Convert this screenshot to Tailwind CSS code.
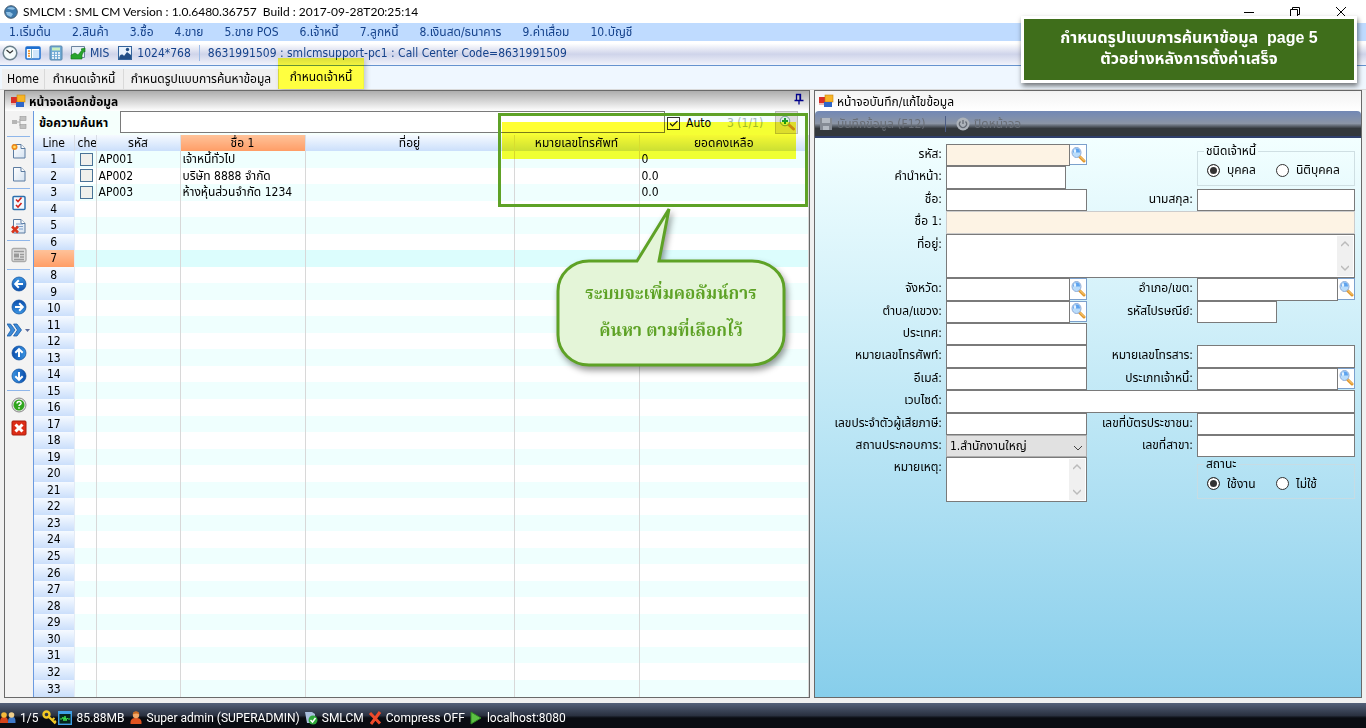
<!DOCTYPE html>
<html lang="th">
<head>
<meta charset="utf-8">
<title>SMLCM</title>
<script src="https://cdn.jsdelivr.net/npm/@tailwindcss/browser@4"></script>
</head>
<body class="relative flex h-screen flex-col overflow-hidden bg-[#f0f0f0] text-xs text-black font-['DejaVu_Sans_Condensed','Noto_Sans_Thai',sans-serif]">

<svg class="absolute size-0" aria-hidden="true">
  <defs>
    <linearGradient id="gBlue" x1="0" y1="0" x2="0" y2="1"><stop offset="0" stop-color="#3a94e2"/><stop offset="1" stop-color="#0b4fae"/></linearGradient>
    <linearGradient id="gPage" x1="0" y1="0" x2="1" y2="1"><stop offset="0" stop-color="#fff"/><stop offset="1" stop-color="#d5e3f2"/></linearGradient>
  </defs>
  <symbol id="form" viewBox="0 0 16 16"><rect x="1" y="4" width="6" height="6" fill="#d8302a"/><rect x="7" y="2" width="8" height="7" fill="#f7b526" stroke="#c8820c" stroke-width=".6"/><rect x="6" y="9" width="8" height="5" fill="#2f66c8"/><rect x="1" y="10" width="5" height="2" fill="#e9b7b0"/></symbol>
  <symbol id="page" viewBox="0 0 16 16"><path d="M2.500 1.500h7.500l4 4v9.500h-11.500z" fill="url(#gPage)" stroke="#5b7ba0"/><path d="M10 1.500v4h4" fill="#fff" stroke="#5b7ba0"/></symbol>
  <symbol id="find" viewBox="0 0 16 16"><path d="M9.500 9.500l4.500 4.500" stroke="#e0962a" stroke-width="3" stroke-linecap="round"/><path d="M10 9.500l4 4" stroke="#ffd98a" stroke-linecap="round"/><ellipse cx="6.500" cy="5.500" rx="4.500" ry="5" fill="#b9dcfb" stroke="#8fabd6"/><path d="M3 5.500a3.500 4 0 0 1 7 0z" fill="#5ea3ee"/><ellipse cx="5" cy="4" rx="1.200" ry="2" fill="#e3f2ff"/></symbol>
  <symbol id="ball" viewBox="0 0 16 16"><circle cx="8" cy="8" r="7" fill="url(#gBlue)" stroke="#0c4a98" stroke-width=".7"/><path d="M12 8H4.500M7.800 4.300L4.200 8l3.600 3.700" fill="none" stroke="#fff" stroke-width="2"/></symbol>
  <symbol id="person" viewBox="0 0 14 14"><path d="M1.500 13c-.5-5 2-6 5.500-6s6 1 5.500 6z" fill="#e0531f"/><circle cx="7" cy="4" r="3.200" fill="#f3a868"/><path d="M3.700 3.500c0-4.500 6.600-4.500 6.600 0-2-1.500-4-1.500-6.600 0z" fill="#c96a22"/></symbol>
</svg>

<!-- Title bar -->
<header class="flex h-[23px] shrink-0 items-center bg-white pl-1">
  <svg class="size-3.5" viewBox="0 0 14 14"><circle cx="7" cy="7" r="6.300" fill="#3c79ad" stroke="#4a5f72"/><path d="M3 3.500c3-2 6-1 8 0-1 2-5 1-8 0zM2 7h4l3 2-2 3-4-2z" fill="#8fbfe3"/></svg>
  <h1 class="ml-[5px] flex-1 whitespace-pre font-['Lato']">SMLCM : SML CM Version : 1.0.6480.36757  Build : 2017-09-28T20:25:14</h1>
  <button aria-label="Minimize" class="flex h-5 w-[46px] items-center justify-center"><svg class="size-3" viewBox="0 0 12 12"><path d="M1 6.500h10" stroke="#000"/></svg></button>
  <button aria-label="Restore" class="flex h-5 w-[46px] items-center justify-center"><svg class="size-3" viewBox="0 0 12 12"><path d="M1.500 3.500h7v7h-7zM3.500 3.500v-2h7v7h-2" fill="none" stroke="#000"/></svg></button>
  <button aria-label="Close" class="mr-0.5 flex h-5 w-[46px] items-center justify-center"><svg class="size-3" viewBox="0 0 12 12"><path d="M1 1l10 10M11 1L1 11" stroke="#000"/></svg></button>
</header>

<!-- Menu bar -->
<nav class="flex h-[18px] shrink-0 items-center gap-[21px] bg-[#bfdbff] pl-[9px] whitespace-nowrap text-[#15428b]">
  <a href="#">1.เริ่มต้น</a><a href="#">2.สินค้า</a><a href="#">3.ซื้อ</a><a href="#">4.ขาย</a><a href="#">5.ขาย POS</a><a href="#">6.เจ้าหนี้</a><a href="#">7.ลูกหนี้</a><a href="#">8.เงินสด/ธนาคาร</a><a href="#">9.ค่าเสื่อม</a><a href="#">10.บัญชี</a>
</nav>

<!-- Tool bar -->
<div class="flex h-[25px] shrink-0 items-center border-b border-[#6593cf] bg-linear-to-b from-white from-10% via-[#cfd4ea] via-55% to-[#f1f3fb] pl-0.5 whitespace-nowrap text-[#15428b]">
  <button aria-label="Clock"><svg class="size-4" viewBox="0 0 16 16"><circle cx="8" cy="8" r="6.800" fill="#f5fbfb" stroke="#6b808c" stroke-width="1.500"/><path d="M4.500 5L8 8l3-2.500" fill="none" stroke="#333" stroke-width="1.200"/></svg></button>
  <button aria-label="Layout" class="ml-[7px]"><svg class="size-4" viewBox="0 0 16 16"><rect x="1" y="2" width="14" height="12" rx="1" fill="#fff" stroke="#1c6fd0" stroke-width="1.500"/><path d="M1 3h14" stroke="#1c6fd0" stroke-width="2"/><path d="M6.500 4v10" stroke="#7ab"/><path d="M3 6h2M3 8.500h2M3 11h2" stroke="#f08a1c" stroke-width="1.500"/><rect x="8" y="5" width="6" height="8" fill="#cfe6fb"/></svg></button>
  <button aria-label="Calculator" class="ml-[7px]"><svg class="size-4" viewBox="0 0 16 16"><rect x="2" y="1" width="12" height="14" rx="1" fill="#6fa9d4" stroke="#5a88ad"/><rect x="4" y="2.500" width="8" height="3" fill="#c9efc0"/><path d="M4 8h8M4 10.500h8M4 13h8" stroke="#fff" stroke-width="1.500" stroke-dasharray="2 1"/></svg></button>
  <button class="ml-[6px] flex items-center gap-1"><svg class="size-4" viewBox="0 0 16 16"><path d="M1.500 1.500h13v11h-13z" fill="#e8f0f8" stroke="#6c84a0"/><path d="M1 14V10l4-2 3 2 4-5-1-1 4-1v4l-1-1-2 4v4z" fill="#27a52c" stroke="#127018" stroke-width=".6"/></svg>MIS</button>
  <button class="ml-[8px] flex items-center gap-1"><svg class="size-4" viewBox="0 0 16 16"><rect x="1.500" y="1.500" width="13" height="13" fill="#e8f2fc" stroke="#35649c"/><path d="M2 14c0-4 3-6 5-3l3-4 4 3v4z" fill="#234f86"/><circle cx="10.500" cy="4.500" r="1.700" fill="#234f86"/></svg>1024*768</button>
  <span class="mx-2 h-4 w-px bg-[#9ebce6]"></span>
  <span>8631991509 : smlcmsupport-pc1 : Call Center Code=8631991509</span>
</div>

<!-- Document tabs -->
<div class="flex h-6 shrink-0 items-end border-b border-[#d9d9d9] bg-[#eff7ff] pl-0.5 whitespace-nowrap">
  <button class="h-5 w-[43px] border-r border-[#d9d9d9] bg-[#f0f0f0]">Home</button>
  <button class="h-5 w-[79px] border-r border-[#d9d9d9] bg-[#f0f0f0]">กำหนดเจ้าหนี้</button>
  <button class="h-5 w-[155px] border-r border-[#d9d9d9] bg-[#f0f0f0]">กำหนดรูปแบบการค้นหาข้อมูล</button>
  <div class="relative h-[23px] w-[84px]">
    <button class="size-full bg-white pb-0.5">กำหนดเจ้าหนี้</button>
    <div class="absolute -top-2 -left-px h-[31px] w-[86px] bg-[#ffff40] mix-blend-multiply shadow-[2px_2px_5px_#0003]"></div>
  </div>
</div>

<main class="flex min-h-0 flex-1 pr-1 pl-1">
  <!-- Record picker -->
  <section class="relative flex w-[806px] shrink-0 flex-col border border-[#696969] bg-white">
    <div class="flex h-[20px] shrink-0 items-center bg-linear-to-b from-[#adadad] to-white pl-[5px]">
      <svg class="size-4"><use href="#form"/></svg>
      <h2 class="ml-[3px] flex-1 pt-0.5 font-bold">หน้าจอเลือกข้อมูล</h2>
      <button aria-label="Pin" class="mr-1 mb-1"><svg class="size-3" viewBox="0 0 12 12"><path d="M3.500 7V1.500h4V7M7 1.500V7M1.500 7.500h9M6 7v4.500" fill="none" stroke="#00008b" stroke-width="1.300"/></svg></button>
    </div>
    <div class="flex min-h-0 flex-1">
      <div class="flex w-[29px] shrink-0 flex-col border-r border-[#6a9ae0] bg-[#f3f3f3] pr-px">
        <button aria-label="Tree" class="flex h-[23px] items-center justify-center"><svg class="size-4" viewBox="0 0 16 16"><path d="M4 7h5M9 4v7M9 4h2M9 11h2" stroke="#aaa" fill="none"/><rect x="1" y="5" width="5" height="4" fill="#b5b5b5"/><rect x="9" y="1.500" width="6" height="4" fill="#c0c0c0" stroke="#999" stroke-width=".6"/><rect x="9" y="9.500" width="6" height="4" fill="#c0c0c0" stroke="#999" stroke-width=".6"/></svg></button>
        <hr class="mx-0.5 my-[2px] border-t-0 border-b border-[#8fb6ea]">
        <button aria-label="New" class="flex h-[23px] items-center justify-center"><svg class="size-4" viewBox="0 0 16 16"><use href="#page"/><circle cx="3.500" cy="4" r="3" fill="#f08a1c"/><circle cx="3.500" cy="4" r="1.300" fill="#ffe46a"/></svg></button>
        <button aria-label="Blank" class="flex h-[23px] items-center justify-center"><svg class="size-4"><use href="#page"/></svg></button>
        <hr class="mx-0.5 mt-[3px] mb-[2px] border-t-0 border-b border-[#8fb6ea]">
        <button aria-label="Select all" class="flex h-[23px] items-center justify-center"><svg class="size-4" viewBox="0 0 16 16"><rect x="2" y="1.500" width="12" height="13" rx="1" fill="#f4f9ff" stroke="#2c6fae" stroke-width="1.500"/><path d="M5 4.500l2 2 3.500-4M5 10l2 2 3.500-4" fill="none" stroke="#d3231c" stroke-width="1.600"/></svg></button>
        <button aria-label="Delete" class="flex h-[23px] items-center justify-center"><svg class="size-4" viewBox="0 0 16 16"><use href="#page"/><path d="M5 6h7M5 8.500h7M8 11h4" stroke="#7b9cc8"/><path d="M1 8.500l6 6M7 8.500l-6 6" stroke="#d8351d" stroke-width="2.500"/></svg></button>
        <hr class="mx-0.5 mt-[3px] mb-[2px] border-t-0 border-b border-[#8fb6ea]">
        <button aria-label="Form view" class="flex h-[23px] items-center justify-center"><svg class="size-4" viewBox="0 0 16 16"><rect x="1" y="1.500" width="14" height="13" rx="1.500" fill="#e0e0e0" stroke="#aaa" stroke-width="1.300"/><path d="M3 4.500h10M9 7.500h4M9 10h4M3 12.500h10" stroke="#999" stroke-width="1.300"/><rect x="3" y="6.500" width="5" height="4" fill="#999"/></svg></button>
        <hr class="mx-0.5 mt-[3px] mb-[2px] border-t-0 border-b border-[#8fb6ea]">
        <button aria-label="Previous" class="flex h-[23px] items-center justify-center"><svg class="size-4"><use href="#ball"/></svg></button>
        <button aria-label="Next" class="flex h-[23px] items-center justify-center"><svg class="size-4 rotate-180"><use href="#ball"/></svg></button>
        <button aria-label="More" class="flex h-[23px] items-center justify-center"><svg class="h-4 w-6" viewBox="0 0 24 16"><path d="M0 2h3.500l4.500 6-4.500 6H0l4-6zM6.500 2H10l4.500 6-4.500 6H6.500l4-6z" fill="#3a8ad8" stroke="#1c5da8" stroke-width=".8"/><path d="M18 7h5l-2.500 3z" fill="#5b6b9b"/></svg></button>
        <button aria-label="Up" class="flex h-[23px] items-center justify-center"><svg class="size-4 rotate-90"><use href="#ball"/></svg></button>
        <button aria-label="Down" class="flex h-[23px] items-center justify-center"><svg class="size-4 -rotate-90"><use href="#ball"/></svg></button>
        <hr class="mx-0.5 mt-[3px] mb-[2px] border-t-0 border-b border-[#8fb6ea]">
        <button aria-label="Help" class="flex h-[23px] items-center justify-center"><svg class="size-4" viewBox="0 0 16 16"><circle cx="8" cy="8" r="7" fill="#e4e4e4" stroke="#8a8a8a"/><circle cx="8" cy="8" r="5.500" fill="#2fa51d"/><path d="M6 6.500c0-3 4.500-2.500 4 0-.3 1.200-2 1-2 2.500M8 10.300v1.400" fill="none" stroke="#fff" stroke-width="1.500"/></svg></button>
        <button aria-label="Close panel" class="flex h-[23px] items-center justify-center"><svg class="size-4" viewBox="0 0 16 16"><rect x="1" y="1" width="14" height="14" rx="1" fill="#dd2d17" stroke="#a81c0c"/><path d="M4.500 4.500l7 7M11.500 4.500l-7 7" stroke="#fff" stroke-width="3"/></svg></button>
      </div>
      <div class="flex min-w-0 flex-1 flex-col">
        <div class="flex h-[24px] shrink-0 items-start bg-[#f5fffc]">
          <label for="q" class="w-[86px] pt-1 pl-[5px] font-bold whitespace-nowrap">ข้อความค้นหา</label>
          <input id="q" class="h-[22px] min-w-0 flex-1 border border-[#7a7a7a] bg-white px-1">
          <label class="flex h-6 w-[62px] items-center gap-[6px] pl-[2px]"><span class="relative flex size-[13px]"><input type="checkbox" checked class="size-[13px] appearance-none border border-[#333] bg-white"><svg class="pointer-events-none absolute inset-0 size-[13px]" viewBox="0 0 13 13"><path d="M3 6.500l2.500 2.500L10.500 4" fill="none" stroke="#222" stroke-width="1.200"/></svg></span>Auto</label>
          <span class="flex h-6 w-[48px] items-center whitespace-nowrap text-[#a3b9b5]">3 (1/1)</span>
          <button aria-label="Find" class="mr-[11px] flex size-[23px] items-center justify-center border border-[#bbb] bg-[#ddd]"><svg class="size-4" viewBox="0 0 16 16"><path d="M9 9l5.500 5" stroke="#c98a44" stroke-width="3" stroke-linecap="round"/><circle cx="6" cy="6" r="4.800" fill="#d9eee2" stroke="#7f9aa0"/><path d="M6 3v6M3 6h6" stroke="#1f9b2d" stroke-width="2"/></svg></button>
        </div>
        <div class="min-h-0 flex-1">
          <table class="h-full w-full table-fixed border-collapse leading-none">
            <colgroup><col class="w-[40px]"><col class="w-[22px]"><col class="w-[84px]"><col class="w-[125px]"><col class="w-[209px]"><col class="w-[125px]"><col></colgroup>
            <thead>
              <tr class="h-[16px] bg-linear-to-b from-[#f6faff] to-[#cbdffb] whitespace-nowrap [&>th]:overflow-hidden [&>th]:border-r [&>th]:border-[#d8dde6] [&>th]:p-0 [&>th]:font-normal">
                <th>Line</th><th class="text-left"><span class="pl-[3px]">che</span></th><th>รหัส</th><th class="bg-linear-to-b from-[#ffc299] to-[#ff9d66]">ชื่อ 1</th><th>ที่อยู่</th><th>หมายเลขโทรศัพท์</th><th>ยอดคงเหลือ</th>
              </tr>
            </thead>
            <tbody id="rows" class="whitespace-nowrap [&_td]:border-r [&_td]:border-[#d8d8d8] [&_td]:p-0 [&_td]:pl-[2px] [&_th]:border-r [&_th]:border-[#e4ebf5] [&_th]:p-0 [&_th]:font-normal"></tbody>
          </table>
        </div>
      </div>
    </div>

    <!-- Highlight marker and callout over the grid -->
    <div class="absolute top-[31px] left-[497px] h-[37px] w-[294px] bg-[#ffff33] mix-blend-multiply"></div>
    <div class="absolute top-[22px] left-[493px] h-[94px] w-[310px] border-3 border-[#5ea226]"></div>
    <svg class="absolute top-[114px] left-[548px] h-[168px] w-[240px] drop-shadow-[2px_4px_3px_#0006]" viewBox="0 0 240 168">
      <path d="M36 56H84L116 4 106 56H199A32 28 0 0 1 231 84V130A32 30 0 0 1 199 160H36A31 30 0 0 1 5 130V86A31 30 0 0 1 36 56Z" fill="#e4f5d8" stroke="#5ea226" stroke-width="3"/>
    </svg>
    <p class="absolute top-[185px] left-[555px] w-[222px] text-center font-['Noto_Serif_Thai','Norasi',serif] text-[17px] leading-[37px] font-bold text-[#5ea226]">ระบบจะเพิ่มคอลัมน์การ<br>ค้นหา ตามที่เลือกไว้</p>
  </section>

  <!-- Record editor -->
  <section class="ml-1 flex min-w-0 flex-1 flex-col border border-[#696969] bg-linear-to-b from-[#f2ffff] from-8% to-[#87ceeb]">
    <div class="flex h-[20px] shrink-0 items-center bg-linear-to-b from-[#f3f3f3] to-white pl-[3px]">
      <svg class="size-4"><use href="#form"/></svg><h2 class="ml-[3px] pt-0.5">หน้าจอบันทึก/แก้ไขข้อมูล</h2>
    </div>
    <div class="flex h-[27px] shrink-0 items-center rounded-t-sm border-b-2 border-[#2f3f6b] bg-linear-to-b from-[#7288b5] via-[#8b95a5] via-50% to-[#33383c] to-70% pl-[4px] text-[#696e76]">
      <button disabled class="flex w-[127px] items-center gap-1 border-r border-[#4c5d85]"><svg class="size-3.5" viewBox="0 0 14 14"><path d="M1 1h12v12H1z" fill="#858b94"/><path d="M3 1h8v5H3zM4 9h6v4H4z" fill="#b4bac2"/></svg>บันทึกข้อมูล (F12)</button>
      <button disabled class="ml-2.5 flex items-center gap-1"><svg class="size-3.5" viewBox="0 0 14 14"><circle cx="7" cy="7" r="6.500" fill="#adb3ba"/><path d="M7 3v4M4.500 4.500a3.500 3.500 0 1 0 5 0" fill="none" stroke="#666c75" stroke-width="1.300"/></svg>ปิดหน้าจอ</button>
    </div>

    <form class="mt-1.5 grid h-[358px] shrink-0 grid-cols-[131px_141px_110px_minmax(0,1fr)] grid-rows-16 pr-1.5 whitespace-nowrap [&>label]:pt-[1px] [&>label]:pr-1 [&>label]:text-right [&>label]:leading-[18px]">
      <label for="f1" class="col-start-1 row-start-1">รหัส:</label>
      <div class="col-start-2 row-start-1 flex"><input id="f1" class="min-w-0 flex-1 border border-[#7a7a7a] bg-[#fdf3e4] px-1"><button type="button" aria-label="Find code" class="mb-px flex w-[17px] items-center justify-center border border-l-0 border-[#7ba0cc] bg-white"><svg class="size-4"><use href="#find"/></svg></button></div>
      <fieldset class="relative col-start-4 row-span-2 row-start-1 mt-[7px] mb-[3px] flex min-w-0 items-center border border-[#cfdfe3] pt-1 pl-[9px]">
        <legend class="absolute -top-[9px] left-[6px] bg-[#effdfe] px-0.5 leading-4">ชนิดเจ้าหนี้</legend>
        <label class="flex w-[69px] items-center gap-[7px]"><input type="radio" name="kind" checked class="size-[13px] appearance-none rounded-full border border-[#333] bg-white checked:bg-[#333] checked:shadow-[inset_0_0_0_2px_#fff]">บุคคล</label>
        <label class="flex items-center gap-[7px]"><input type="radio" name="kind" class="size-[13px] appearance-none rounded-full border border-[#333] bg-white">นิติบุคคล</label>
      </fieldset>
      <label for="f2" class="col-start-1 row-start-2">คำนำหน้า:</label>
      <input id="f2" class="col-start-2 row-start-2 mr-[21px] min-w-0 border border-[#7a7a7a] bg-white px-1">
      <label for="f3" class="col-start-1 row-start-3">ชื่อ:</label>
      <input id="f3" class="col-start-2 row-start-3 min-w-0 border border-[#7a7a7a] bg-white px-1">
      <label for="f4" class="col-start-3 row-start-3">นามสกุล:</label>
      <input id="f4" class="col-start-4 row-start-3 min-w-0 border border-[#7a7a7a] bg-white px-1">
      <label for="f5" class="col-start-1 row-start-4">ชื่อ 1:</label>
      <input id="f5" class="col-span-3 col-start-2 row-start-4 min-w-0 border border-[#ccc] bg-[#fdf3e4] px-1">
      <label for="f6" class="col-start-1 row-start-5">ที่อยู่:</label>
      <div class="col-span-3 col-start-2 row-span-2 row-start-5 flex border border-[#7a7a7a] bg-white"><textarea id="f6" class="min-w-0 flex-1 resize-none px-1"></textarea><div class="m-px flex w-[16px] flex-col items-center justify-between bg-[#f0f0f0] py-1"><svg class="size-2" viewBox="0 0 8 8"><path d="M0 6l4-4 4 4" fill="none" stroke="#bbb" stroke-width="1.500"/></svg><svg class="size-2" viewBox="0 0 8 8"><path d="M0 2l4 4 4-4" fill="none" stroke="#bbb" stroke-width="1.500"/></svg></div></div>
      <label for="f7" class="col-start-1 row-start-7">จังหวัด:</label>
      <div class="col-start-2 row-start-7 flex"><input id="f7" class="min-w-0 flex-1 border border-[#7a7a7a] bg-white px-1"><button type="button" aria-label="Find province" class="mb-px flex w-[17px] items-center justify-center border border-l-0 border-[#7ba0cc] bg-white"><svg class="size-4"><use href="#find"/></svg></button></div>
      <label for="f8" class="col-start-3 row-start-7">อำเภอ/เขต:</label>
      <div class="col-start-4 row-start-7 flex"><input id="f8" class="min-w-0 flex-1 border border-[#7a7a7a] bg-white px-1"><button type="button" aria-label="Find district" class="mb-px flex w-[17px] items-center justify-center border border-l-0 border-[#7ba0cc] bg-white"><svg class="size-4"><use href="#find"/></svg></button></div>
      <label for="f9" class="col-start-1 row-start-8">ตำบล/แขวง:</label>
      <div class="col-start-2 row-start-8 flex"><input id="f9" class="min-w-0 flex-1 border border-[#7a7a7a] bg-white px-1"><button type="button" aria-label="Find subdistrict" class="mb-px flex w-[17px] items-center justify-center border border-l-0 border-[#7ba0cc] bg-white"><svg class="size-4"><use href="#find"/></svg></button></div>
      <label for="f10" class="col-start-3 row-start-8">รหัสไปรษณีย์:</label>
      <input id="f10" class="col-start-4 row-start-8 w-20 border border-[#7a7a7a] bg-white px-1">
      <label for="f11" class="col-start-1 row-start-9">ประเทศ:</label>
      <input id="f11" class="col-start-2 row-start-9 min-w-0 border border-[#7a7a7a] bg-white px-1">
      <label for="f12" class="col-start-1 row-start-10">หมายเลขโทรศัพท์:</label>
      <input id="f12" class="col-start-2 row-start-10 min-w-0 border border-[#7a7a7a] bg-white px-1">
      <label for="f13" class="col-start-3 row-start-10">หมายเลขโทรสาร:</label>
      <input id="f13" class="col-start-4 row-start-10 min-w-0 border border-[#7a7a7a] bg-white px-1">
      <label for="f14" class="col-start-1 row-start-11">อีเมล์:</label>
      <input id="f14" class="col-start-2 row-start-11 min-w-0 border border-[#7a7a7a] bg-white px-1">
      <label for="f15" class="col-start-3 row-start-11">ประเภทเจ้าหนี้:</label>
      <div class="col-start-4 row-start-11 flex"><input id="f15" class="min-w-0 flex-1 border border-[#7a7a7a] bg-white px-1"><button type="button" aria-label="Find type" class="mb-px flex w-[17px] items-center justify-center border border-l-0 border-[#7ba0cc] bg-white"><svg class="size-4"><use href="#find"/></svg></button></div>
      <label for="f16" class="col-start-1 row-start-12">เวบไซด์:</label>
      <input id="f16" class="col-span-3 col-start-2 row-start-12 min-w-0 border border-[#7a7a7a] bg-white px-1">
      <label for="f17" class="col-start-1 row-start-13">เลขประจำตัวผู้เสียภาษี:</label>
      <input id="f17" class="col-start-2 row-start-13 min-w-0 border border-[#7a7a7a] bg-white px-1">
      <label for="f18" class="col-start-3 row-start-13">เลขที่บัตรประชาชน:</label>
      <input id="f18" class="col-start-4 row-start-13 min-w-0 border border-[#7a7a7a] bg-white px-1">
      <label for="f19" class="col-start-1 row-start-14">สถานประกอบการ:</label>
      <div class="relative col-start-2 row-start-14 flex min-w-0"><select id="f19" class="min-w-0 flex-1 appearance-none border border-[#adadad] bg-[#e1e1e1] px-[3px] leading-none"><option>1.สำนักงานใหญ่</option></select><svg class="pointer-events-none absolute top-2 right-1 size-2.5" viewBox="0 0 10 10"><path d="M1 3l4 4 4-4" fill="none" stroke="#444"/></svg></div>
      <label for="f20" class="col-start-3 row-start-14">เลขที่สาขา:</label>
      <input id="f20" class="col-start-4 row-start-14 min-w-0 border border-[#7a7a7a] bg-white px-1">
      <label for="f21" class="col-start-1 row-start-15">หมายเหตุ:</label>
      <div class="col-start-2 row-span-2 row-start-15 flex min-w-0 border border-[#7a7a7a] bg-white"><textarea id="f21" class="min-w-0 flex-1 resize-none px-1"></textarea><div class="m-px flex w-[16px] flex-col items-center justify-between bg-[#f0f0f0] py-1"><svg class="size-2" viewBox="0 0 8 8"><path d="M0 6l4-4 4 4" fill="none" stroke="#bbb" stroke-width="1.500"/></svg><svg class="size-2" viewBox="0 0 8 8"><path d="M0 2l4 4 4-4" fill="none" stroke="#bbb" stroke-width="1.500"/></svg></div></div>
      <fieldset class="relative col-start-4 row-span-2 row-start-15 mt-[7px] mb-[3px] flex min-w-0 items-center border border-[#c6dce4] pt-1 pl-[9px]">
        <legend class="absolute -top-[7px] left-[6px] bg-[#b4e3f3] px-0.5 leading-3">สถานะ</legend>
        <label class="flex w-[69px] items-center gap-[7px]"><input type="radio" name="state" checked class="size-[13px] appearance-none rounded-full border border-[#333] bg-white checked:bg-[#333] checked:shadow-[inset_0_0_0_2px_#fff]">ใช้งาน</label>
        <label class="flex items-center gap-[7px]"><input type="radio" name="state" class="size-[13px] appearance-none rounded-full border border-[#333] bg-white">ไม่ใช้</label>
      </fieldset>
    </form>
  </section>
</main>

<!-- Status bar -->
<footer class="mt-[5px] flex h-[25px] shrink-0 items-center bg-linear-to-b from-[#55617a] via-[#2a3140] via-50% to-[#0a0c12] to-60% pt-1 whitespace-nowrap text-white font-['Roboto']">
  <svg class="size-4" viewBox="0 0 16 16"><path d="M0 13c0-5 1-6 4-6s4 1 4 6z" fill="#d6451c"/><circle cx="4" cy="5" r="2.800" fill="#f5b93a"/><path d="M8 13c0-5 1-6 4-6s3.500 1 3.500 6z" fill="#3f78c8"/><circle cx="11.500" cy="5" r="2.800" fill="#f0cf8a"/></svg>
  <span class="ml-1">1/5</span>
  <svg class="ml-1 size-4" viewBox="0 0 16 16"><circle cx="4.500" cy="4.500" r="3" fill="none" stroke="#f2c924" stroke-width="2.400"/><path d="M6.500 6.500l7 7M10 10l2.500-2M12 12.500l2-1.500" stroke="#f2c924" stroke-width="2.200"/></svg>
  <svg class="size-3.5" viewBox="0 0 14 14"><rect x=".7" y=".7" width="12.600" height="12.600" fill="#06251c" stroke="#3fa0e6" stroke-width="1.400"/><path d="M1 2h12" stroke="#3fa0e6" stroke-width="2"/><path d="M2 8h2l1-2 1 4 1-5 1 5 1-3 1 1h2" fill="none" stroke="#3be04c"/></svg>
  <span class="ml-1">85.88MB</span>
  <svg class="ml-1 size-3.5"><use href="#person"/></svg>
  <span class="ml-1">Super admin (SUPERADMIN)</span>
  <svg class="ml-1 size-3.5" viewBox="0 0 14 14"><path d="M1 1h7l3 2v9H3z" fill="#a9bfdc"/><circle cx="9" cy="9" r="4.500" fill="#2fa83a"/><path d="M6.500 9l2 2 3-4" fill="none" stroke="#fff" stroke-width="1.500"/></svg>
  <span class="ml-1">SMLCM</span>
  <svg class="ml-1 size-3.5" viewBox="0 0 14 14"><path d="M2 2l10 10.500M12 1L3 13" stroke="#ee4a2a" stroke-width="3"/></svg>
  <span class="ml-1">Compress OFF</span>
  <svg class="ml-1 size-3.5" viewBox="0 0 14 14"><path d="M2 1l10 6-10 6z" fill="#5cc043" stroke="#2f8a22"/></svg>
  <span class="ml-1">localhost:8080</span>
</footer>

<!-- Page banner -->
<div class="absolute top-4 right-[9px] flex h-[67px] w-[336px] flex-col items-center justify-center border-3 border-white bg-[#3f6e1b] pb-1 text-base leading-[21px] font-bold whitespace-pre text-white shadow-[1px_3px_5px_#0008] font-['Liberation_Sans','Noto_Sans_Thai',sans-serif]"><p>กำหนดรูปแบบการค้นหาข้อมูล  page 5</p><p>ตัวอย่างหลังการตั้งค่าเสร็จ</p></div>

<script>
  const records = [
    ['AP001', 'เจ้าหนี้ทั่วไป', '0'],
    ['AP002', 'บริษัท 8888 จำกัด', '0.0'],
    ['AP003', 'ห้างหุ้นส่วนจำกัด 1234', '0.0'],
  ];
  const body = document.getElementById('rows');
  for (let n = 1; n <= 33; n++) {
    const r = records[n - 1];
    const tone = n === 7 ? 'bg-[#dcfdfd]' : n % 2 ? 'bg-[#effffe]' : 'bg-white';
    const head = n === 7 ? 'bg-linear-to-b from-[#ffc299] to-[#ff9d66]' : 'bg-linear-to-b from-[#f6faff] to-[#cbdffb]';
    const tick = r ? `<input type="checkbox" aria-label="${r[0]}" class="mx-auto -my-px block size-[13px] appearance-none border border-[#4a7397] bg-[#f0f0ec]">` : '';
    body.insertAdjacentHTML('beforeend', `<tr class="${tone}"><th scope="row" class="${head}">${n}</th><td>${tick}</td><td>${r ? r[0] : ''}</td><td>${r ? r[1] : ''}</td><td></td><td></td><td>${r ? r[2] : ''}</td></tr>`);
  }
</script>
</body>
</html>
